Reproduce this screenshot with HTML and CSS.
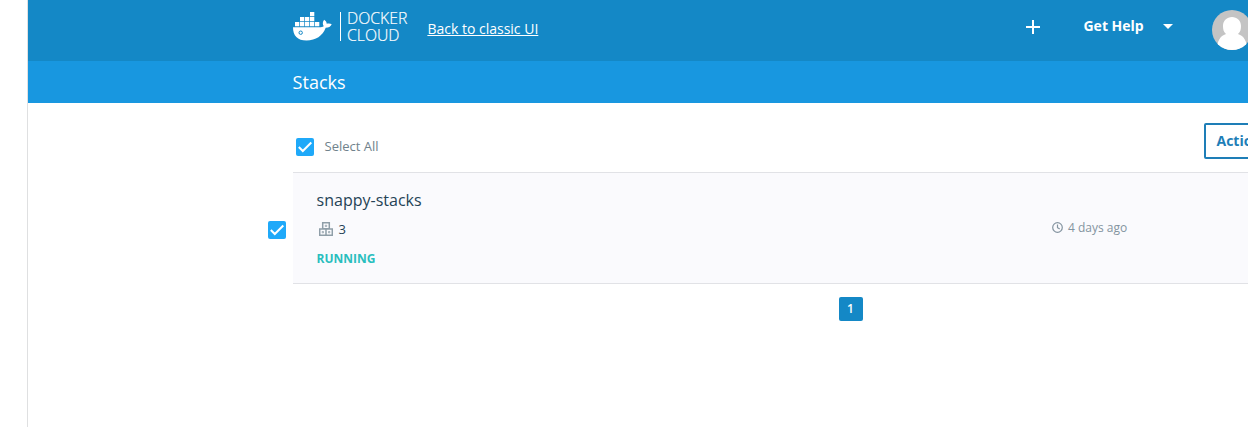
FILE: index.html
```html
<!DOCTYPE html>
<html lang="en">
<head>
<meta charset="utf-8">
<title>Stacks</title>
<link rel="stylesheet" href="styles.css">
</head>
<body>
<div class="app">
  <aside class="rail"></aside>
  <main class="main">
    <header class="topbar">
      <svg class="whale" width="39" height="29" viewBox="0 0 39 29" fill="#fff">
        <path d="M17 0h4.300v4.300H17zM7 5h4.300v4.300H7zM12 5h4.300v4.300H12zM17 5h4.300v4.300H17zM2 10h4.300v4.300H2zM7 10h4.300v4.300H7zM12 10h4.300v4.300H12zM17 10h4.300v4.300H17zM22 10h4.300v4.300H22z"/>
        <path d="M0 15.200H26.500C28.200 15.200 29.700 14.900 30.700 14.200C29.400 12 29.500 9.800 31.200 7.800C32.800 8.900 33.700 10.300 33.700 11.800C35.600 11.300 37.500 11.500 38.700 12.200C37.700 14.600 35.500 15.800 32.700 15.800C29.500 24 23 28.500 13.500 28.500C4.500 28.500 0 23.800 0 15.200Z"/>
        <circle cx="7.700" cy="20.700" r="1.700" fill="#fff" stroke="#1488c6" stroke-width="1"/>
      </svg>
      <div class="brand"><span>DOCKER</span><span>CLOUD</span></div>
      <a class="classic" href="#">Back to classic UI</a>
      <svg class="plus" width="14" height="14" viewBox="0 0 14 14"><path d="M7 0v14M0 7h14" stroke="#fff" stroke-width="2"/></svg>
      <span class="help">Get Help</span>
      <svg class="caret" width="10" height="5" viewBox="0 0 10 5"><path d="M0 0h10L5 5z" fill="#fff"/></svg>
      <svg class="avatar" width="40" height="40" viewBox="0 0 40 40">
        <clipPath id="round"><circle cx="20" cy="20" r="20"/></clipPath>
        <g clip-path="url(#round)"><path d="M0 0h40v40H0z" fill="#c4c4c4"/><path d="M5 40C5 31 8 26 14 24C11.500 22 11 19 11 16C11 10.500 15 7 20 7S29 10.500 29 16C29 19 28.500 22 26 24C32 26 35 31 35 40Z" fill="#fff"/></g>
      </svg>
    </header>
    <div class="titlebar">Stacks</div>
    <section class="content">
      <div class="toolbar">
        <span class="check"><svg width="18" height="18" viewBox="0 0 18 18"><path d="M2.800 9l4 4L15.300 4.500" fill="none" stroke="#fff" stroke-width="2"/></svg></span>
        <span class="select">Select All</span>
        <button class="actions">Actions</button>
      </div>
      <div class="row">
        <span class="check"><svg width="18" height="18" viewBox="0 0 18 18"><path d="M2.800 9l4 4L15.300 4.500" fill="none" stroke="#fff" stroke-width="2"/></svg></span>
        <article class="stack">
          <div class="info">
            <div class="name">snappy-stacks</div>
            <div class="count">
              <svg width="14" height="14" viewBox="0 0 14 14" fill="none" stroke="#8f9ea8" stroke-width="1.500"><path d="M3.700 .7h6.600v6H3.700zM.7 6.900H7v6.400H.7zM7 6.900h6.300v6.400H7z"/><path d="M6.300 3.200h1.400v1.300H6.300zM3.200 9.500h1.300v1.300H3.200zM9.500 9.500h1.300v1.300H9.500z" stroke-width=".8"/></svg>
              <span>3</span>
            </div>
            <div class="state">RUNNING</div>
          </div>
          <div class="age">
            <svg width="11" height="11" viewBox="0 0 11 11" fill="none" stroke="#8494a0" stroke-width="1.200"><circle cx="5.500" cy="5.500" r="4.800"/><path d="M5.500 2.500v3.200l2.200 1.200"/></svg>
            <span>4 days ago</span>
          </div>
        </article>
      </div>
      <div class="pager"><span class="page">1</span></div>
    </section>
  </main>
</div>
</body>
</html>
```
FILE: styles.css
```css
* { box-sizing: border-box; }
body { margin: 0; overflow: hidden; background: #fff; font-family: "Open Sans", sans-serif; color: #254356; }
.app { display: flex; height: 427px; width: 1248px; overflow: hidden; }
.rail { flex: none; width: 28px; border-right: 1px solid #dfe0e1; }
.main { flex: none; width: 1380px; }
.topbar { display: flex; align-items: flex-start; height: 61px; padding-left: 265px; background: #1488c6; color: #fff; }
.whale { flex: none; margin-top: 12px; }
.brand { display: flex; flex-direction: column; width: 75px; height: 29px; margin: 12px 0 0 8px; padding-left: 6px; border-left: 1px solid #fff; font-size: 15.8px; font-weight: 300; line-height: 16px; -webkit-text-stroke: .2px #fff; }
.brand span { margin-top: -2px; margin-bottom: 2.5px; }
.classic { width: 120px; margin: 19px 0 0 12.4px; font-size: 14px; line-height: 20px; color: #fff; white-space: nowrap; }
.plus { margin: 20px 0 0 478.6px; }
.help { width: 79.500px; margin: 16px 0 0 43.500px; font-size: 14px; font-weight: 700; line-height: 20px; }
.caret { margin: 24px 0 0 0; }
.avatar { margin: 10px 0 0 39px; }
.titlebar { height: 42px; padding-left: 264.6px; background: #1897e0; color: #fff; font-size: 18px; line-height: 43px; }
.toolbar { display: flex; align-items: flex-start; height: 69px; padding-left: 268px; }
.check { flex: none; width: 18px; height: 18px; border-radius: 2px; background: #1fa9f9; }
.check svg { display: block; }
.toolbar .check { margin-top: 35px; }
.select { width: 69.400px; margin: 34px 0 0 10.600px; font-size: 13px; line-height: 18px; color: #70828c; }
.actions { width: 90px; height: 36px; margin: 20px 0 0 810px; padding: 0 0 2px 10.500px; border: 2px solid #1e7eb7; border-radius: 2px; background: #fff; color: #1e7eb7; font: 700 14px "Open Sans", sans-serif; text-align: left; }
.row { display: flex; align-items: flex-start; height: 112px; padding-left: 240px; }
.row .check { margin-top: 49px; }
.stack { display: flex; width: 1115px; height: 112px; margin-left: 7px; padding-left: 23.600px; border-top: 1px solid #e1e2e6; border-bottom: 1px solid #e1e2e6; background: #fafafd; }
.info { width: 735.400px; }
.name { margin-top: 16px; font-size: 16px; line-height: 22px; }
.count { display: flex; align-items: center; gap: 6px; height: 20px; margin-top: 8px; padding-left: 2px; font-size: 13px; }
.state { margin-top: 11px; font-size: 12px; font-weight: 700; line-height: 18px; color: #29bebe; }
.age { display: flex; align-items: center; gap: 5px; height: 18px; margin-top: 45px; font-size: 12px; color: #8494a0; }
.pager { display: flex; justify-content: center; width: 1115px; margin: 13px 0 0 265px; }
.page { width: 24px; height: 24px; border-radius: 2px; background: #1488c6; color: #fff; font-size: 12px; font-weight: 600; line-height: 24px; text-align: center; }
```
